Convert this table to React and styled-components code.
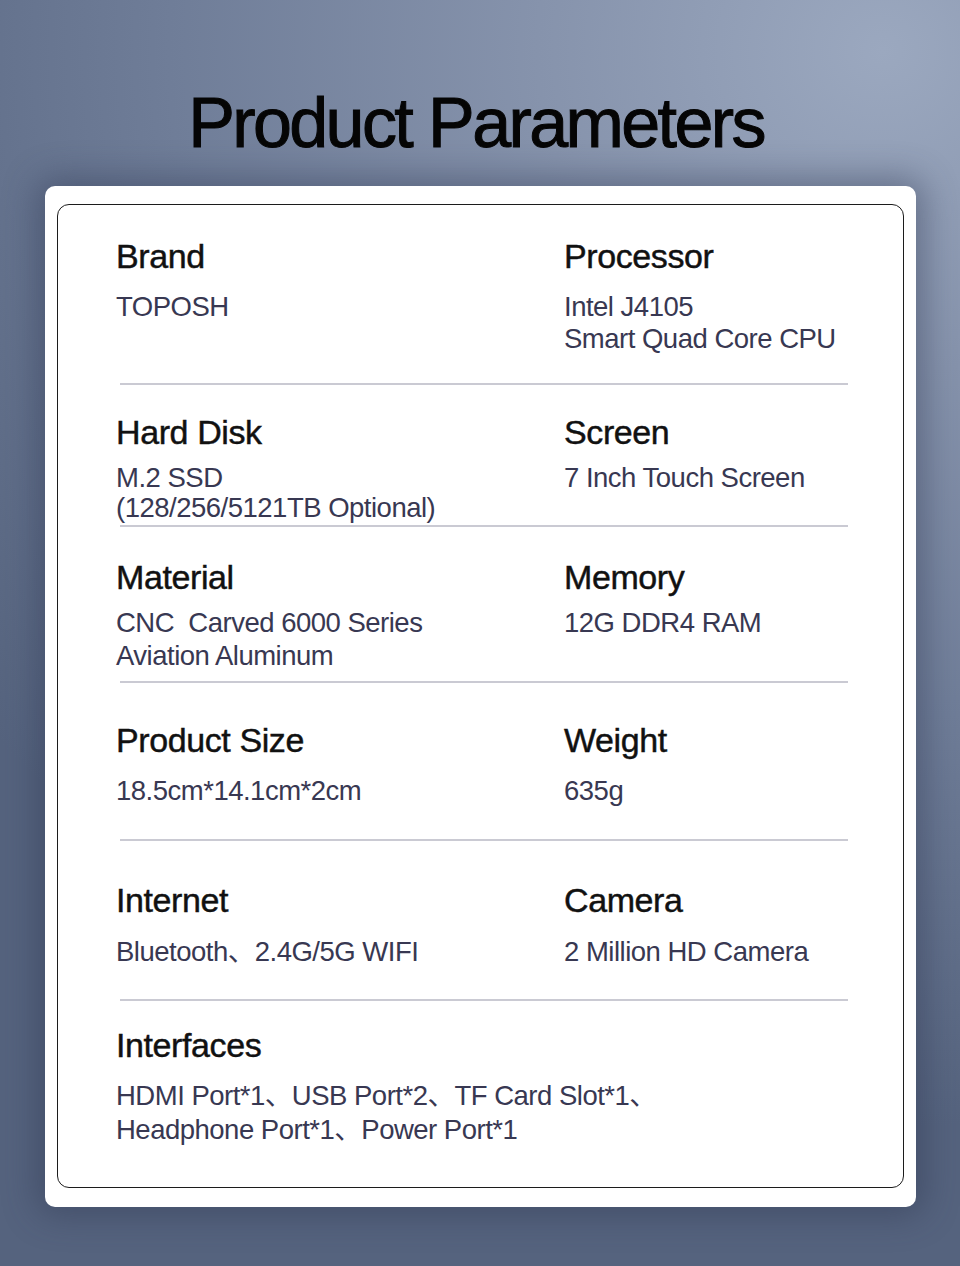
import React from 'react';
import styled, { createGlobalStyle } from 'styled-components';

const GlobalStyle = createGlobalStyle`
  html, body {
    margin: 0;
    padding: 0;
  }
  body {
    font-family: 'Liberation Sans', Arial, 'Noto Sans CJK SC', sans-serif;
  }
`;

const Page = styled.div`
  min-height: 1266px;
  box-sizing: border-box;
  padding: 83px 44px 0 45px;
  background: radial-gradient(120% 85% at 92% 4%, #9ba8bf 0%, #8693ac 30%, #6f7d98 62%, #55637e 100%);
  overflow: hidden;
`;

const Title = styled.h1`
  margin: 0 0 23px;
  padding-right: 9px;
  text-align: center;
  font-size: 70px;
  line-height: 80px;
  font-weight: 400;
  letter-spacing: -2.6px;
  color: #050505;
  -webkit-text-stroke: 1px #050505;
`;

const Card = styled.section`
  background: #fff;
  border-radius: 10px;
  padding: 18px 12px 19px;
  box-shadow: 0 0 34px 8px rgba(44, 54, 80, 0.45);
`;

const Frame = styled.div`
  border: 1.5px solid #1c1c1c;
  border-radius: 12px;
`;

const Row = styled.div`
  display: grid;
  grid-template-columns: ${p => (p.$wide ? '1fr' : '448px 1fr')};
  padding: ${p => p.$top}px 0 ${p => p.$bottom}px 58px;
`;

const Cell = styled.div`
  display: flex;
  flex-direction: column;
  gap: ${p => p.$gap}px;
`;

const Label = styled.div`
  font-size: 34px;
  line-height: 40px;
  letter-spacing: -0.4px;
  color: #111;
  -webkit-text-stroke: 0.45px #111;
`;

const Value = styled.div`
  font-size: 27.5px;
  line-height: ${p => p.$lh}px;
  letter-spacing: -0.5px;
  white-space: pre;
  color: #383852;
`;

const Divider = styled.hr`
  margin: 0 0 0 62px;
  width: 728px;
  height: 2px;
  border: 0;
  background: #cacad3;
`;

const rows = [
  {
    top: 31, gap: 14.5, bottom: 28, lh: 32,
    items: [
      { label: 'Brand', value: ['TOPOSH'] },
      { label: 'Processor', value: ['Intel J4105', 'Smart Quad Core CPU'] }
    ]
  },
  {
    top: 27.5, gap: 11, bottom: 2, lh: 30,
    items: [
      { label: 'Hard Disk', value: ['M.2 SSD', '(128/256/5121TB Optional)'] },
      { label: 'Screen', value: ['7 Inch Touch Screen'] }
    ]
  },
  {
    top: 29.5, gap: 9.5, bottom: 9, lh: 33,
    items: [
      { label: 'Material', value: ['CNC  Carved 6000 Series', 'Aviation Aluminum'] },
      { label: 'Memory', value: ['12G DDR4 RAM'] }
    ]
  },
  {
    top: 36.5, gap: 15.5, bottom: 32, lh: 32,
    items: [
      { label: 'Product Size', value: ['18.5cm*14.1cm*2cm'] },
      { label: 'Weight', value: ['635g'] }
    ]
  },
  {
    top: 39, gap: 16, bottom: 31, lh: 32,
    items: [
      { label: 'Internet', value: ['Bluetooth、2.4G/5G WIFI'] },
      { label: 'Camera', value: ['2 Million HD Camera'] }
    ]
  },
  {
    top: 23.5, gap: 14.5, bottom: 39.5, lh: 34, wide: true,
    items: [
      {
        label: 'Interfaces',
        value: ['HDMI Port*1、USB Port*2、TF Card Slot*1、', 'Headphone Port*1、Power Port*1']
      }
    ]
  }
];

const App = () => (
  <>
    <GlobalStyle />
    <Page>
      <Title>Product Parameters</Title>
      <Card>
        <Frame>
          {rows.map((row, i) => (
            <React.Fragment key={i}>
              <Row $top={row.top} $bottom={row.bottom} $wide={row.wide}>
                {row.items.map(item => (
                  <Cell key={item.label} $gap={row.gap}>
                    <Label>{item.label}</Label>
                    <div>
                      {item.value.map(line => (
                        <Value key={line} $lh={row.lh}>
                          {line}
                        </Value>
                      ))}
                    </div>
                  </Cell>
                ))}
              </Row>
              {i < rows.length - 1 && <Divider />}
            </React.Fragment>
          ))}
        </Frame>
      </Card>
    </Page>
  </>
);

export default App;
